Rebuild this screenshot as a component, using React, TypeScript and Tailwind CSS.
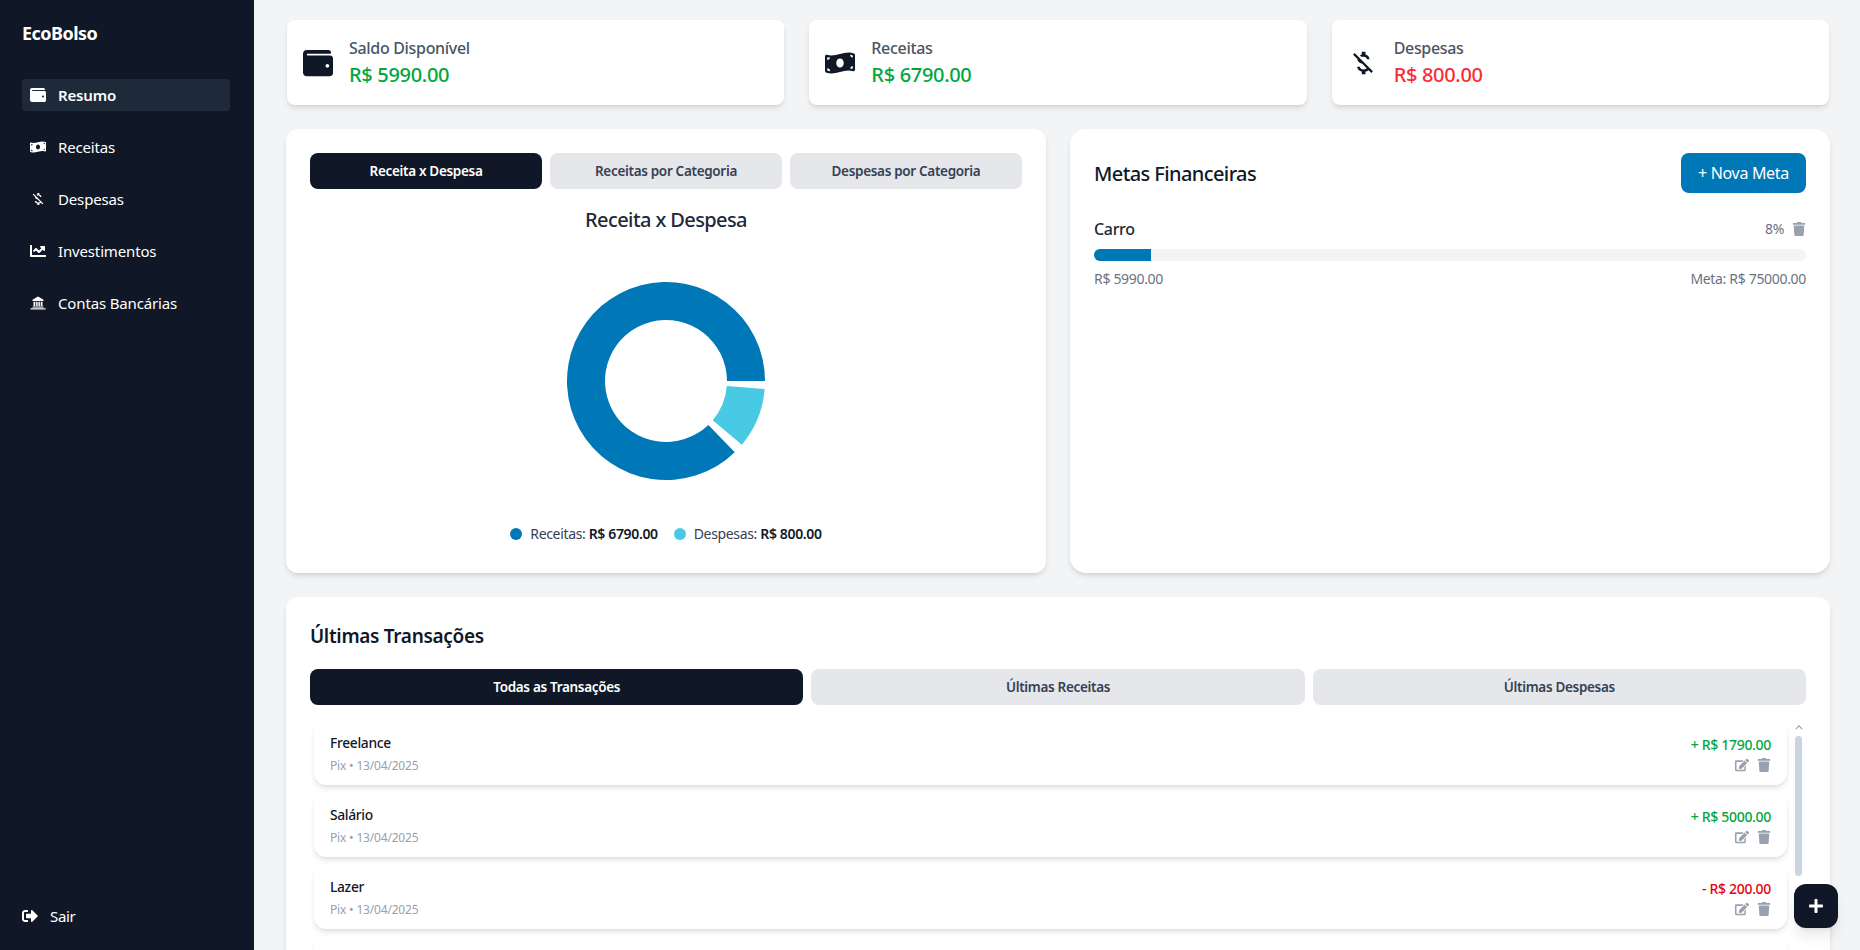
import { FaChartLine, FaEdit, FaMoneyBillWave, FaPlus, FaSignOutAlt, FaTrash, FaWallet } from 'react-icons/fa';
import { MdMoneyOff } from 'react-icons/md';

const BankIcon = ({ size }: { size: number }) => (
	<svg viewBox="0 0 16 16" width={size} height={size} fill="currentColor">
		<path d="M8 1.5l5.5 3.2V6h-11V4.7z" />
		<rect x="3.5" y="6.8" width="1.8" height="4.4" />
		<rect x="6.1" y="6.8" width="1.5" height="4.4" />
		<rect x="8.4" y="6.8" width="1.5" height="4.4" />
		<rect x="10.7" y="6.8" width="1.8" height="4.4" />
		<rect x="2.5" y="11.6" width="11" height="1" />
		<rect x="0.5" y="13" width="15" height="1.6" opacity="0.75" />
	</svg>
);

const navItems = [
	{ label: 'Resumo', icon: FaWallet, active: true },
	{ label: 'Receitas', icon: FaMoneyBillWave },
	{ label: 'Despesas', icon: MdMoneyOff },
	{ label: 'Investimentos', icon: FaChartLine },
	{ label: 'Contas Bancárias', icon: BankIcon }
];

const summaryCards = [
	{ title: 'Saldo Disponível', value: 'R$ 5990.00', icon: FaWallet, color: 'text-green-600' },
	{ title: 'Receitas', value: 'R$ 6790.00', icon: FaMoneyBillWave, color: 'text-green-600' },
	{ title: 'Despesas', value: 'R$ 800.00', icon: MdMoneyOff, color: 'text-red-500' }
];

// The fourth row is cut by the bottom of the window, so only its card shows
const transactions = [
	{ name: 'Freelance', amount: '+ R$ 1790.00', color: 'text-green-600' },
	{ name: 'Salário', amount: '+ R$ 5000.00', color: 'text-green-600' },
	{ name: 'Lazer', amount: '- R$ 200.00', color: 'text-red-600' }
];

// Ring slice between two angles, measured clockwise from 3 o'clock
const slice = (from: number, to: number, outer = 99, inner = 61) => {
	const pt = (r: number, a: number) => {
		const rad = (a * Math.PI) / 180;
		return `${(100 + r * Math.cos(rad)).toFixed(2)} ${(100 + r * Math.sin(rad)).toFixed(2)}`;
	};
	const large = to - from > 180 ? 1 : 0;
	return `M${pt(outer, from)} A${outer} ${outer} 0 ${large} 1 ${pt(outer, to)} L${pt(inner, to)} A${inner} ${inner} 0 ${large} 0 ${pt(inner, from)} Z`;
};

const Tabs = ({ items }: { items: string[] }) => (
	<div className="grid grid-cols-3 gap-2">
		{items.map((item, index) => (
			<div
				key={item}
				className={`h-9 flex items-center justify-center rounded-lg text-[13.5px] font-semibold ${index === 0 ? 'bg-gray-900 text-white' : 'bg-gray-200 text-gray-700'}`}
			>
				{item}
			</div>
		))}
	</div>
);

export default function App() {
	return (
		<div className="flex h-screen overflow-hidden bg-gray-100 font-['Noto_Sans',sans-serif] tracking-[-0.02em]">
			<aside className="w-[254px] shrink-0 bg-gray-900 text-white flex flex-col pl-[22px] pr-6 pt-[19px] pb-[23px]">
				<div className="text-lg font-bold tracking-[-0.03em] mb-8">EcoBolso</div>
				<nav className="flex flex-col gap-5">
					{navItems.map((item) => (
						<div
							key={item.label}
							className={`h-8 px-2 flex items-center gap-3 rounded text-[15px] tracking-[-0.01em] ${item.active ? 'bg-gray-800 font-semibold' : ''}`}
						>
							<item.icon size={16} />
							<span>{item.label}</span>
						</div>
					))}
				</nav>
				<div className="mt-auto flex items-center gap-3 text-[15px]">
					<FaSignOutAlt size={16} />
					<span>Sair</span>
				</div>
			</aside>

			<main className="flex-1 min-w-0 pl-8 pr-[30px] pt-5">
				<div className="grid grid-cols-3 gap-[25px] px-px mb-6">
					{summaryCards.map((card) => (
						<div key={card.title} className="h-[85px] bg-white rounded-lg shadow-md p-4 flex items-center gap-4">
							<card.icon size={30} className="text-gray-900" />
							<div>
								<div className="-mt-px text-base leading-6 font-medium text-gray-600">{card.title}</div>
								<div className={`mt-px text-xl leading-7 font-medium ${card.color}`}>{card.value}</div>
							</div>
						</div>
					))}
				</div>

				<div className="grid grid-cols-2 gap-6 mb-6">
					<section className="h-[444px] bg-white rounded-xl shadow-md p-6">
						<Tabs items={['Receita x Despesa', 'Receitas por Categoria', 'Despesas por Categoria']} />
						<h2 className="mt-[17px] text-center text-xl tracking-[-0.03em] font-medium text-gray-800">Receita x Despesa</h2>
						<svg viewBox="0 0 200 200" className="w-[200px] h-[200px] mx-auto mt-[47px]">
							<path d={slice(46, 360)} fill="#0077b6" />
							<path d={slice(4.6, 40)} fill="#48cae4" />
						</svg>
						<div className="mt-[43px] flex justify-center items-center gap-4 text-sm leading-5 tracking-[-0.025em] text-gray-700">
							<div className="flex items-center gap-2">
								<span className="w-3 h-3 rounded-full bg-[#0077b6]" />
								<span>Receitas: <b className="font-semibold text-gray-900">R$ 6790.00</b></span>
							</div>
							<div className="flex items-center gap-2">
								<span className="w-3 h-3 rounded-full bg-[#48cae4]" />
								<span>Despesas: <b className="font-semibold text-gray-900">R$ 800.00</b></span>
							</div>
						</div>
					</section>

					<section className="h-[444px] bg-white rounded-2xl shadow-md p-6">
						<div className="flex items-center justify-between mb-6">
							<h2 className="pt-px text-xl tracking-[-0.03em] font-medium text-gray-900">Metas Financeiras</h2>
							<button className="h-10 w-[125px] rounded-lg bg-[#0077b6] text-white text-base">+ Nova Meta</button>
						</div>
						<div className="flex items-center justify-between">
							<span className="font-medium text-gray-800">Carro</span>
							<div className="flex items-center gap-2 text-sm text-gray-500">
								<span>8%</span>
								<FaTrash size={14} className="text-gray-400" />
							</div>
						</div>
						<div className="mt-2 h-3 rounded-full bg-gray-100 overflow-hidden">
							<div className="h-full bg-[#0077b6]" style={{ width: '8%' }} />
						</div>
						<div className="mt-2 flex justify-between text-sm leading-5 text-gray-500">
							<span>R$ 5990.00</span>
							<span>Meta: R$ 75000.00</span>
						</div>
					</section>
				</div>

				<section className="bg-white rounded-xl shadow-md p-6">
					<h2 className="pt-px text-[19px] leading-7 font-semibold text-gray-900 mb-[19px]">Últimas Transações</h2>
					<Tabs items={['Todas as Transações', 'Últimas Receitas', 'Últimas Despesas']} />
					<div className="mt-4 flex gap-2">
						<div className="flex-1 min-w-0 flex flex-col gap-2 pl-1">
							{transactions.map((tx) => (
								<div key={tx.name} className="h-16 bg-white rounded-xl shadow-md px-4 flex items-center justify-between">
									<div>
										<div className="text-[13.8px] leading-5 font-medium text-gray-900">{tx.name}</div>
										<div className="mt-[5px] text-xs tracking-[-0.015em] text-gray-400">Pix • 13/04/2025</div>
									</div>
									<div className="flex flex-col items-end">
										<div className={`text-sm leading-5 font-medium ${tx.color}`}>{tx.amount}</div>
										<div className="mt-[3px] flex items-center gap-2 text-gray-400">
											<FaEdit size={14} />
											<FaTrash size={14} />
										</div>
									</div>
								</div>
							))}
							<div className="h-16 bg-white rounded-xl shadow-md" />
						</div>
						<div className="w-[7px] mr-1 flex flex-col items-center">
							<svg viewBox="0 0 10 6" className="w-2 h-[5px] mt-1 mb-[6px] shrink-0 text-gray-400" fill="none" stroke="currentColor" strokeWidth="1.5">
								<path d="M1 5l4-4 4 4" />
							</svg>
							<div className="w-[7px] h-[140px] rounded-sm bg-slate-300" />
						</div>
					</div>
				</section>
			</main>

			<button className="fixed right-[22px] bottom-[22px] w-11 h-11 rounded-xl bg-gray-900 text-white shadow-lg flex items-center justify-center">
				<FaPlus size={16} />
			</button>
		</div>
	);
}
